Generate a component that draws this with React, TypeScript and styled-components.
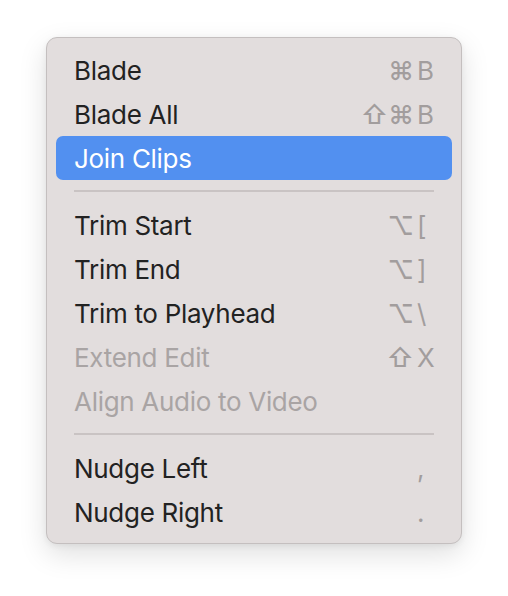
import React from "react";
import styled, { createGlobalStyle } from "styled-components";

const Global = createGlobalStyle`
  html, body { margin: 0; padding: 0; background: #ffffff; }
  body { font-family: Inter, "Noto Sans", "Liberation Sans", sans-serif; }
`;

const Stage = styled.div`
  padding: 37px 0 0 46px;
  width: 508px;
  height: 596px;
  box-sizing: border-box;
`;

const Menu = styled.div`
  width: 416px;
  box-sizing: border-box;
  background: #e2dddd;
  border: 1px solid #c4bfbf;
  border-radius: 11px;
  padding: 10px 9px 9px;
  box-shadow: 0 10px 28px rgba(0, 0, 0, 0.13), 0 2px 6px rgba(0, 0, 0, 0.06);
  display: flex;
  flex-direction: column;
`;

const Item = styled.div<{ $active?: boolean; $disabled?: boolean }>`
  height: 44px;
  display: flex;
  align-items: center;
  padding: 1px 18px 0 18px;
  box-sizing: border-box;
  border-radius: 7px;
  font-size: 26px;
  letter-spacing: -0.3px;
  background: ${(p) => (p.$active ? "#5290f0" : "transparent")};
  color: ${(p) => (p.$active ? "#ffffff" : p.$disabled ? "#a9a4a4" : "#222222")};
`;

const Label = styled.span`
  flex: 1;
  white-space: nowrap;
`;

const Shortcut = styled.span<{ $active?: boolean }>`
  display: flex;
  align-items: center;
  letter-spacing: 0;
  color: ${(p) => (p.$active ? "#ffffff" : "#a29d9d")};
`;

const Mods = styled.span`
  text-align: right;
  white-space: nowrap;
  font-weight: 500;
`;

const Key = styled.span`
  width: 17px;
  margin-left: 3px;
  text-align: left;
  white-space: nowrap;
`;

const Separator = styled.div`
  height: 2px;
  background: #c9c3c3;
  margin: 10px 18px 11px 18px;
`;

type Row = { label: string; mods?: string; key?: string; active?: boolean; disabled?: boolean } | "sep";

const rows: Row[] = [
  { label: "Blade", mods: "⌘", key: "B" },
  { label: "Blade All", mods: "⇧⌘", key: "B" },
  { label: "Join Clips", active: true },
  "sep",
  { label: "Trim Start", mods: "⌥", key: "[" },
  { label: "Trim End", mods: "⌥", key: "]" },
  { label: "Trim to Playhead", mods: "⌥", key: "\\" },
  { label: "Extend Edit", mods: "⇧", key: "X", disabled: true },
  { label: "Align Audio to Video", disabled: true },
  "sep",
  { label: "Nudge Left", key: "," },
  { label: "Nudge Right", key: "." },
];

export default function App() {
  return (
    <>
      <Global />
      <Stage>
        <Menu>
          {rows.map((r, i) =>
            r === "sep" ? (
              <Separator key={i} />
            ) : (
              <Item key={i} $active={r.active} $disabled={r.disabled}>
                <Label>{r.label}</Label>
                {r.key && (
                  <Shortcut $active={r.active}>
                    <Mods>{r.mods}</Mods>
                    <Key>{r.key}</Key>
                  </Shortcut>
                )}
              </Item>
            )
          )}
        </Menu>
      </Stage>
    </>
  );
}
